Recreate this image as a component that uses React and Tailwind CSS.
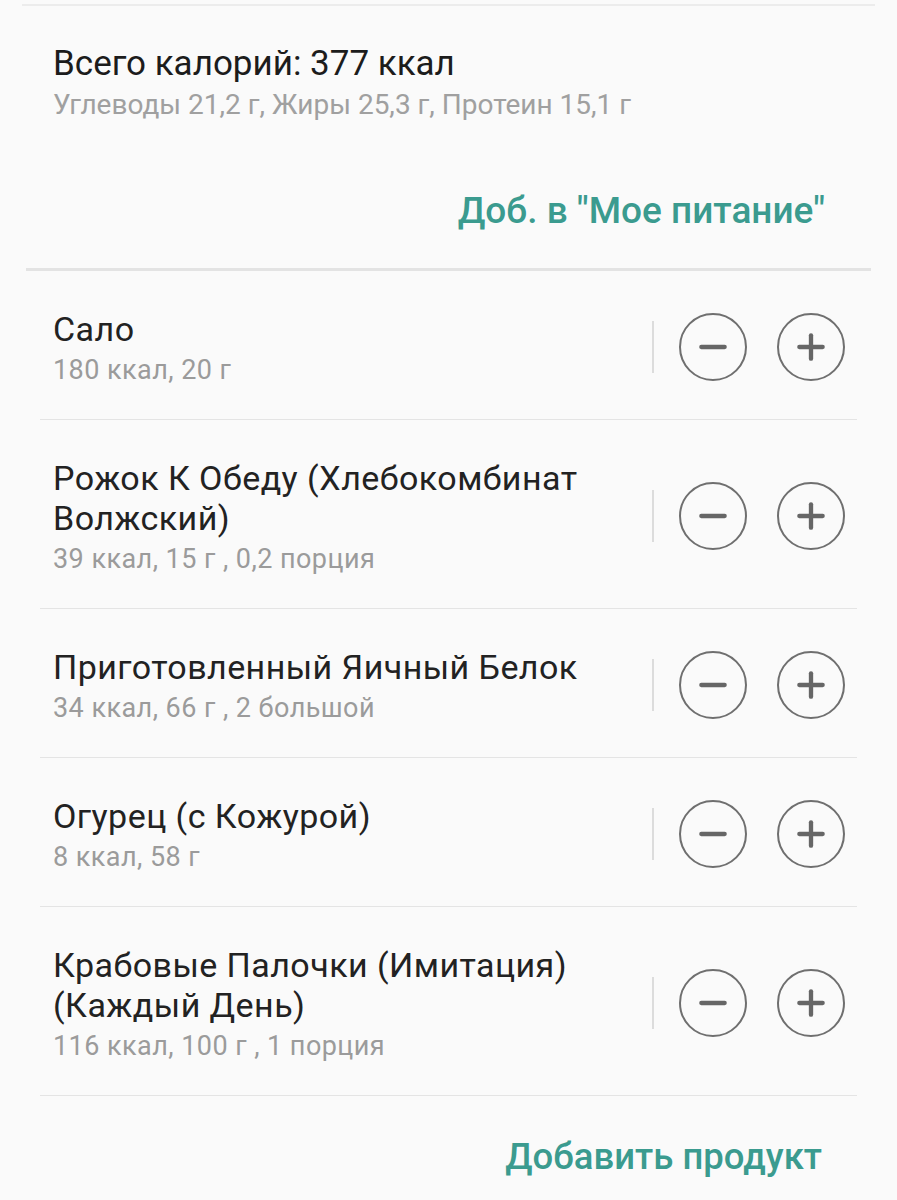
import { Minus, Plus } from 'lucide-react';

const items = [
  { name: 'Сало', info: '180 ккал, 20 г' },
  { name: 'Рожок К Обеду (Хлебокомбинат Волжский)', info: '39 ккал, 15 г , 0,2 порция' },
  { name: 'Приготовленный Яичный Белок', info: '34 ккал, 66 г , 2 большой' },
  { name: 'Огурец (с Кожурой)', info: '8 ккал, 58 г' },
  { name: 'Крабовые Палочки (Имитация) (Каждый День)', info: '116 ккал, 100 г , 1 порция' },
];

function RoundButton({ children }) {
  return (
    <button className="w-[68px] h-[68px] rounded-full border-2 border-[#6f6f6f] flex items-center justify-center text-[#666]">
      {children}
    </button>
  );
}

function FoodRow({ name, info }) {
  return (
    <div className="flex items-center border-b border-[#e4e4e4] pt-[38px] pb-[28px]">
      <div className="flex-1 min-w-0 pl-[13px]">
        <p className="text-[34px] leading-[40px] tracking-[0.45px] text-[#222] max-w-[560px]">{name}</p>
        <p className="text-[27px] leading-[42px] tracking-[0.45px] text-[#9b9b9b]">{info}</p>
      </div>
      <div className="w-[2px] h-[52px] bg-[#dcdcdc] mr-[25px] -mt-[6px]" />
      <div className="flex gap-[30px] mr-[12px] -mt-[6px]">
        <RoundButton><Minus size={40} strokeWidth={2.6} /></RoundButton>
        <RoundButton><Plus size={40} strokeWidth={2.6} /></RoundButton>
      </div>
    </div>
  );
}

export default function App() {
  return (
    <div className="w-[897px] h-[1200px] overflow-hidden bg-[#fafafa] font-['Roboto',sans-serif]">
      <div className="mx-[22px] mt-[4px] h-[2px] bg-[#ececec]" />
      <div className="px-[53px] pt-[36px]">
        <p className="text-[35px] leading-[44px] text-[#1c1c1c] whitespace-nowrap">Всего калорий: 377 ккал</p>
        <p className="text-[28px] leading-[38px] text-[#a0a0a0] whitespace-nowrap">Углеводы 21,2 г, Жиры 25,3 г, Протеин 15,1 г</p>
      </div>
      <div className="flex justify-end pr-[72px] pt-[62px] pb-[32px]">
        <button className="text-[37px] leading-[50px] font-medium text-[#3b9b8f] whitespace-nowrap">Доб. в "Мое питание"</button>
      </div>
      <div className="mx-[26px] h-[3px] bg-[#e3e3e3]" />
      <div className="mx-[40px]">
        {items.map((it) => (
          <FoodRow key={it.name} {...it} />
        ))}
      </div>
      <div className="flex justify-end pr-[75px] pt-[37px]">
        <button className="text-[36.5px] leading-[48px] font-medium text-[#3b9b8f] whitespace-nowrap">Добавить продукт</button>
      </div>
    </div>
  );
}
